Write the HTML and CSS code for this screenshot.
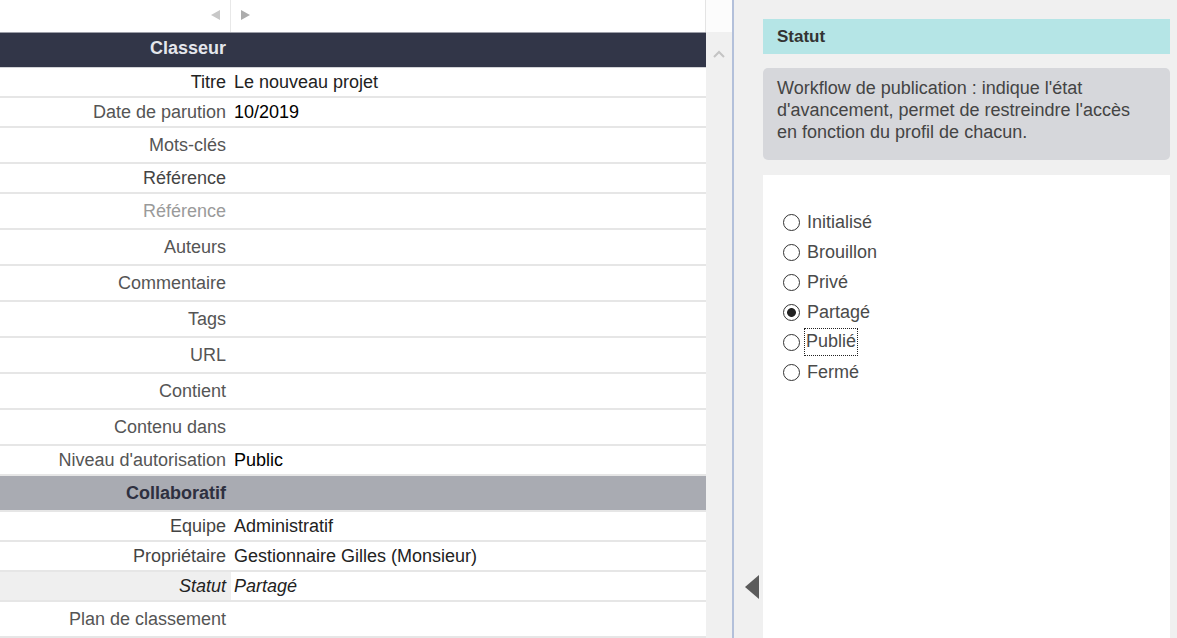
FILE: index.html
```html
<!DOCTYPE html>
<html lang="fr">
<head>
    <meta charset="UTF-8">
    <title>Classeur - Le nouveau projet</title>
    <link rel="stylesheet" href="styles.css">
</head>
<body>

    <div class="app">
        <div class="left-pane">
            <div class="nav-bar">
                <div class="nav-main">
                    <span class="nav-prev">
                        <svg width="9" height="10" viewBox="0 0 9 10"><polygon points="9,0 9,10 0,5" fill="#c8c8c8"/></svg>
                    </span>
                    <span class="nav-next">
                        <svg width="9" height="10" viewBox="0 0 9 10"><polygon points="0,0 0,10 9,5" fill="#acacac"/></svg>
                    </span>
                </div>
                <div class="nav-corner"></div>
            </div>

            <div class="pane-body">
                <div class="sheet">
                    <div class="section-head dark">
                        <div class="cell-label">Classeur</div>
                    </div>
                    <div class="row">
                        <div class="cell-label strong">Titre</div>
                        <div class="cell-value">Le nouveau projet</div>
                    </div>
                    <div class="row">
                        <div class="cell-label">Date de parution</div>
                        <div class="cell-value deep">10/2019</div>
                    </div>
                    <div class="row tall">
                        <div class="cell-label">Mots-clés</div>
                        <div class="cell-value"></div>
                    </div>
                    <div class="row">
                        <div class="cell-label medium">Référence</div>
                        <div class="cell-value"></div>
                    </div>
                    <div class="row tall">
                        <div class="cell-label faded">Référence</div>
                        <div class="cell-value"></div>
                    </div>
                    <div class="row tall">
                        <div class="cell-label">Auteurs</div>
                        <div class="cell-value"></div>
                    </div>
                    <div class="row tall">
                        <div class="cell-label">Commentaire</div>
                        <div class="cell-value"></div>
                    </div>
                    <div class="row tall">
                        <div class="cell-label">Tags</div>
                        <div class="cell-value"></div>
                    </div>
                    <div class="row tall">
                        <div class="cell-label">URL</div>
                        <div class="cell-value"></div>
                    </div>
                    <div class="row tall">
                        <div class="cell-label">Contient</div>
                        <div class="cell-value"></div>
                    </div>
                    <div class="row tall">
                        <div class="cell-label">Contenu dans</div>
                        <div class="cell-value"></div>
                    </div>
                    <div class="row">
                        <div class="cell-label">Niveau d'autorisation</div>
                        <div class="cell-value deep">Public</div>
                    </div>
                    <div class="section-head light">
                        <div class="cell-label">Collaboratif</div>
                    </div>
                    <div class="row">
                        <div class="cell-label medium">Equipe</div>
                        <div class="cell-value">Administratif</div>
                    </div>
                    <div class="row">
                        <div class="cell-label medium">Propriétaire</div>
                        <div class="cell-value">Gestionnaire Gilles (Monsieur)</div>
                    </div>
                    <div class="row selected">
                        <div class="cell-label strong">Statut</div>
                        <div class="cell-value">Partagé</div>
                    </div>
                    <div class="row tall">
                        <div class="cell-label">Plan de classement</div>
                        <div class="cell-value"></div>
                    </div>
                </div>
                <div class="scrollbar">
                    <svg width="12" height="8" viewBox="0 0 12 8"><polyline points="1,7 6,2 11,7" fill="none" stroke="#c4c4c4" stroke-width="2"/></svg>
                </div>
            </div>
        </div>

        <div class="divider"></div>

        <div class="right-pane">
            <div class="collapse-tab">
                <svg width="14" height="24" viewBox="0 0 14 24"><polygon points="14,0 14,24 0,12" fill="#5b5b5b"/></svg>
            </div>
            <div class="field-title">Statut</div>
            <div class="field-help">Workflow de publication : indique l'état d'avancement, permet de restreindre l'accès en fonction du profil de chacun.</div>
            <div class="field-box">
                <label class="choice"><input type="radio" name="statut"><span>Initialisé</span></label>
                <label class="choice"><input type="radio" name="statut"><span>Brouillon</span></label>
                <label class="choice"><input type="radio" name="statut"><span>Privé</span></label>
                <label class="choice"><input type="radio" name="statut" checked><span>Partagé</span></label>
                <label class="choice focused"><input type="radio" name="statut"><span>Publié</span></label>
                <label class="choice"><input type="radio" name="statut"><span>Fermé</span></label>
            </div>
        </div>
    </div>

</body>
</html>
```

FILE: styles.css
```css
body {
    margin: 0;
    font-family: "Liberation Sans", Arial, sans-serif;
    font-size: 18px;
    color: #555;
    overflow: hidden;
}

.app {
    display: flex;
    height: 638px;
}

/* Left pane */
.left-pane {
    width: 732px;
    display: flex;
    flex-direction: column;
    background: #ffffff;
}
.nav-bar {
    height: 32px;
    display: flex;
}
.nav-main {
    width: 705px;
    display: flex;
    align-items: stretch;
    border-right: 1px solid #e4e4e4;
}
.nav-prev {
    width: 231px;
    box-sizing: border-box;
    padding-right: 10px;
    padding-bottom: 3px;
    display: flex;
    align-items: center;
    justify-content: flex-end;
    border-right: 1px solid #e8e8e8;
}
.nav-next {
    margin-left: 10px;
    padding-bottom: 3px;
    display: flex;
    align-items: center;
}
.nav-corner {
    flex: 1;
    background: #fcfcfc;
}

.pane-body {
    flex: 1;
    display: flex;
    min-height: 0;
}
.sheet {
    width: 706px;
}
.scrollbar {
    flex: 1;
    background: #f0f0f0;
    padding: 10px 0 0 7px;
}

.section-head {
    display: flex;
    box-sizing: border-box;
    font-weight: bold;
}
.section-head.dark {
    height: 36px;
    padding-bottom: 3px;
    background: #323648;
    color: #e4e6ec;
    border-top: 1px solid #9c9ea8;
    border-bottom: 1px solid #d2d3d7;
}
.section-head.light {
    height: 36px;
    background: #a9abb2;
    color: #2e3040;
    border-bottom: 2px solid #e6e6e6;
}

.row {
    display: flex;
    height: 30px;
    box-sizing: border-box;
    border-bottom: 2px solid #e6e6e6;
}
.row.tall {
    height: 36px;
}
.cell-label {
    width: 231px;
    box-sizing: border-box;
    padding-right: 5px;
    display: flex;
    align-items: center;
    justify-content: flex-end;
    white-space: nowrap;
}
.cell-value {
    flex: 1;
    padding-left: 3px;
    display: flex;
    align-items: center;
    color: #222;
    white-space: nowrap;
}
.cell-value.deep {
    color: #000;
}
.cell-label.strong {
    color: #222;
}
.cell-label.medium {
    color: #444;
}
.cell-label.faded {
    color: #9a9a9a;
}
.row.selected .cell-label {
    background: #efefef;
}
.row.selected .cell-label,
.row.selected .cell-value {
    font-style: italic;
}

.divider {
    width: 2px;
    background: #b3c0da;
}

/* Right pane */
.right-pane {
    flex: 1;
    position: relative;
    display: flex;
    flex-direction: column;
    background: #f0f0f0;
    padding: 19px 7px 0 29px;
}
.collapse-tab {
    position: absolute;
    left: 11px;
    top: 575px;
    line-height: 0;
}
.field-title {
    height: 35px;
    line-height: 35px;
    padding-left: 14px;
    background: #b5e5e6;
    color: #333;
    font-weight: bold;
    font-size: 17px;
}
.field-help {
    margin-top: 14px;
    padding: 9px 24px 17px 14px;
    background: #d6d7db;
    border-radius: 5px;
    color: #444;
    line-height: 22px;
}
.field-box {
    flex: 1;
    margin-top: 15px;
    background: #ffffff;
    padding: 32px 0 0 20px;
}

.choice {
    display: flex;
    align-items: center;
    height: 30px;
    color: #4a4a4a;
}
.choice input {
    appearance: none;
    -webkit-appearance: none;
    width: 17px;
    height: 17px;
    margin: 0 7px 0 0;
    border: 1.6px solid #333;
    border-radius: 50%;
    box-sizing: border-box;
    background: #ffffff;
}
.choice input:checked {
    background: radial-gradient(circle, #222 0, #222 4px, #ffffff 4.8px);
}
.choice.focused span {
    outline: 1px dotted #222;
    padding: 2px 1px 3px 1px;
    margin-left: -2px;
}
```
